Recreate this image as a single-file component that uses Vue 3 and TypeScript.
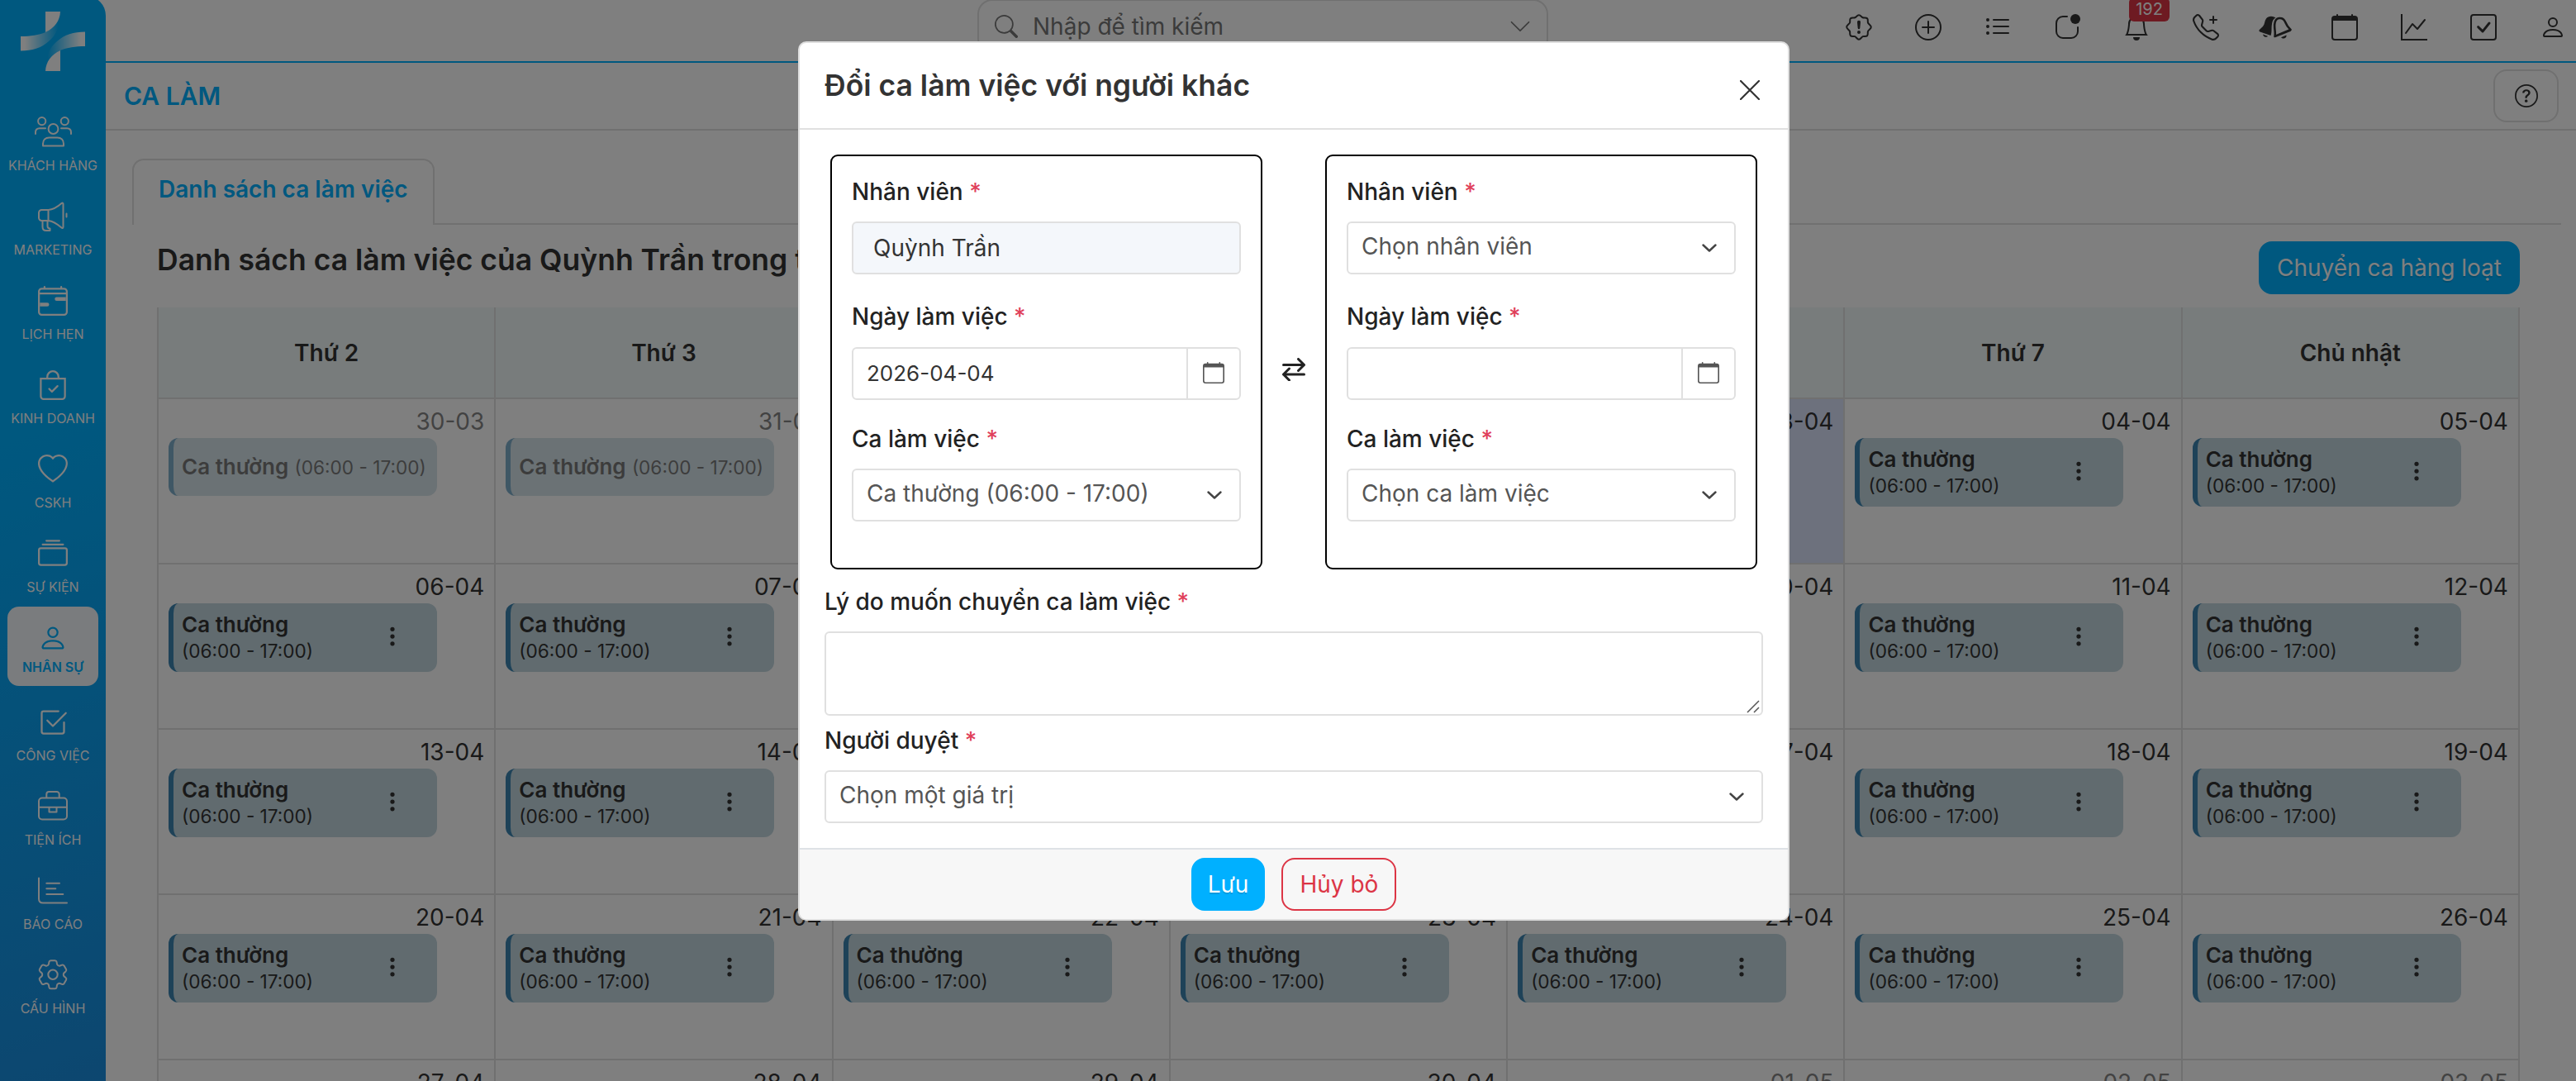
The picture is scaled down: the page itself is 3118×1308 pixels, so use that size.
<script setup lang="ts">
interface NavItem { label: string; icon: string; active?: boolean }
interface Day { date: string; muted?: boolean; past?: boolean; today?: boolean }

const nav: NavItem[] = [
  { label: 'KHÁCH HÀNG', icon: 'people' },
  { label: 'MARKETING', icon: 'megaphone' },
  { label: 'LỊCH HẸN', icon: 'calendar-range' },
  { label: 'KINH DOANH', icon: 'bag' },
  { label: 'CSKH', icon: 'heart' },
  { label: 'SỰ KIỆN', icon: 'collection' },
  { label: 'NHÂN SỰ', icon: 'person', active: true },
  { label: 'CÔNG VIỆC', icon: 'check2-square' },
  { label: 'TIỆN ÍCH', icon: 'briefcase' },
  { label: 'BÁO CÁO', icon: 'report' },
  { label: 'CẤU HÌNH', icon: 'gear' },
]

// Filled 16-unit glyphs, one or more paths each
const glyphs: Record<string, string[]> = {
  'calendar-range': [
    'M9 7a1 1 0 0 1 1-1h5v2h-5a1 1 0 0 1-1-1M1 9h4a1 1 0 0 1 0 2H1z',
    'M3.500 0a.5.5 0 0 1 .5.5V1h8V.5a.5.5 0 0 1 1 0V1h1a2 2 0 0 1 2 2v11a2 2 0 0 1-2 2H2a2 2 0 0 1-2-2V3a2 2 0 0 1 2-2h1V.5a.5.5 0 0 1 .5-.5M2 2a1 1 0 0 0-1 1v.6h14V3a1 1 0 0 0-1-1zm13 2.600H1V14a1 1 0 0 0 1 1h12a1 1 0 0 0 1-1z',
  ],
  bag: [
    'M10.854 8.146a.5.5 0 0 1 0 .708l-3 3a.5.5 0 0 1-.708 0l-1.500-1.500a.5.5 0 0 1 .708-.708L7.500 10.793l2.646-2.647a.5.5 0 0 1 .708 0',
    'M8 1a2.500 2.500 0 0 1 2.500 2.500V4h-5v-.5A2.500 2.500 0 0 1 8 1m3.500 3v-.5a3.500 3.500 0 1 0-7 0V4H1v10a2 2 0 0 0 2 2h10a2 2 0 0 0 2-2V4zM2 5h12v9a1 1 0 0 1-1 1H3a1 1 0 0 1-1-1z',
  ],
  heart: ['m8 2.748-.717-.737C5.600.281 2.514.878 1.400 3.053c-.523 1.023-.641 2.500.314 4.385.920 1.815 2.834 3.989 6.286 6.357 3.452-2.368 5.365-4.542 6.286-6.357.955-1.886.838-3.362.314-4.385C13.486.878 10.400.280 8.717 2.010zM8 15C-7.333 4.868 3.279-3.040 7.824 1.143q.090.083.176.171a3 3 0 0 1 .176-.170C12.720-3.042 23.333 4.867 8 15'],
  collection: ['M2.500 3.500a.5.5 0 0 1 0-1h11a.5.5 0 0 1 0 1zm2-2a.5.5 0 0 1 0-1h7a.5.5 0 0 1 0 1zM0 13a1.500 1.500 0 0 0 1.500 1.500h13A1.500 1.500 0 0 0 16 13V6a1.500 1.500 0 0 0-1.500-1.500h-13A1.500 1.500 0 0 0 0 6zm1.500.5A.5.5 0 0 1 1 13V6a.5.5 0 0 1 .5-.5h13a.5.5 0 0 1 .5.5v7a.5.5 0 0 1-.5.5z'],
  person: ['M8 8a3 3 0 1 0 0-6 3 3 0 0 0 0 6m2-3a2 2 0 1 1-4 0 2 2 0 0 1 4 0m4 8c0 1-1 1-1 1H3s-1 0-1-1 1-4 6-4 6 3 6 4m-1-.004c-.001-.246-.154-.986-.832-1.664C11.516 10.680 10.289 10 8 10s-3.516.680-4.168 1.332c-.678.678-.830 1.418-.832 1.664z'],
  'check2-square': [
    'M3 14.500A1.500 1.500 0 0 1 1.500 13V3A1.500 1.500 0 0 1 3 1.500h8a.5.5 0 0 1 0 1H3a.5.5 0 0 0-.5.5v10a.5.5 0 0 0 .5.5h10a.5.5 0 0 0 .5-.5V8a.5.5 0 0 1 1 0v5a1.500 1.500 0 0 1-1.500 1.500z',
    'm8.354 10.354 7-7a.5.5 0 0 0-.708-.708L8 9.293 5.354 6.646a.5.5 0 1 0-.708.708l3 3a.5.5 0 0 0 .708 0',
  ],
  plus: [
    'M8 15A7 7 0 1 1 8 1a7 7 0 0 1 0 14m0 1A8 8 0 1 0 8 0a8 8 0 0 0 0 16',
    'M8 4a.5.5 0 0 1 .5.5v3h3a.5.5 0 0 1 0 1h-3v3a.5.5 0 0 1-1 0v-3h-3a.5.5 0 0 1 0-1h3v-3A.5.5 0 0 1 8 4',
  ],
  list: ['M5 11.500a.5.5 0 0 1 .5-.5h9a.5.5 0 0 1 0 1h-9a.5.5 0 0 1-.5-.5m0-4a.5.5 0 0 1 .5-.5h9a.5.5 0 0 1 0 1h-9a.5.5 0 0 1-.5-.5m0-4a.5.5 0 0 1 .5-.5h9a.5.5 0 0 1 0 1h-9a.5.5 0 0 1-.5-.5m-3 1a1 1 0 1 0 0-2 1 1 0 0 0 0 2m0 4a1 1 0 1 0 0-2 1 1 0 0 0 0 2m0 4a1 1 0 1 0 0-2 1 1 0 0 0 0 2'],
  app: [
    'M5.500 2A3.500 3.500 0 0 0 2 5.500v5A3.500 3.500 0 0 0 5.500 14h5a3.500 3.500 0 0 0 3.500-3.500V8a.5.5 0 0 1 1 0v2.500a4.500 4.500 0 0 1-4.500 4.500h-5A4.500 4.500 0 0 1 1 10.500v-5A4.500 4.500 0 0 1 5.500 1H8a.5.5 0 0 1 0 1z',
    'M16 3a3 3 0 1 1-6 0 3 3 0 0 1 6 0',
  ],
  bell: ['M8 16a2 2 0 0 0 2-2H6a2 2 0 0 0 2 2M8 1.918l-.797.161A4 4 0 0 0 4 6c0 .628-.134 2.197-.459 3.742-.160.767-.376 1.566-.663 2.258h10.244c-.287-.692-.502-1.490-.663-2.258C12.134 8.197 12 6.628 12 6a4 4 0 0 0-3.203-3.920zM14.220 12c.223.447.481.801.780 1H1c.299-.199.557-.553.780-1C2.680 10.200 3 6.880 3 6c0-2.420 1.720-4.440 4.005-4.901a1 1 0 1 1 1.990 0A5 5 0 0 1 13 6c0 .880.320 4.200 1.220 6'],
  phone: [
    'M3.654 1.328a.678.678 0 0 0-1.015-.063L1.605 2.300c-.483.484-.661 1.169-.450 1.770a17.600 17.600 0 0 0 4.168 6.608 17.600 17.600 0 0 0 6.608 4.168c.601.211 1.286.033 1.770-.450l1.034-1.034a.678.678 0 0 0-.063-1.015l-2.307-1.794a.680.680 0 0 0-.580-.122l-2.190.547a1.750 1.750 0 0 1-1.657-.459L5.482 8.062a1.750 1.750 0 0 1-.460-1.657l.548-2.190a.680.680 0 0 0-.122-.580zM1.884.511a1.745 1.745 0 0 1 2.612.163L6.290 2.980c.329.423.445.974.315 1.494l-.547 2.190a.680.680 0 0 0 .178.643l2.457 2.457a.680.680 0 0 0 .644.178l2.189-.547a1.750 1.750 0 0 1 1.494.315l2.306 1.794c.829.645.905 1.870.163 2.611l-1.034 1.034c-.740.740-1.846 1.065-2.877.702a18.600 18.600 0 0 1-7.010-4.420 18.600 18.600 0 0 1-4.420-7.009c-.362-1.030-.037-2.137.703-2.877z',
    'M12.500 1a.5.5 0 0 1 .5.5V3h1.500a.5.5 0 0 1 0 1H13v1.500a.5.5 0 0 1-1 0V4h-1.500a.5.5 0 0 1 0-1H12V1.500a.5.5 0 0 1 .5-.5',
  ],
  calendar: ['M3.500 0a.5.5 0 0 1 .5.5V1h8V.5a.5.5 0 0 1 1 0V1h1a2 2 0 0 1 2 2v11a2 2 0 0 1-2 2H2a2 2 0 0 1-2-2V3a2 2 0 0 1 2-2h1V.5a.5.5 0 0 1 .5-.5M1 4v10a1 1 0 0 0 1 1h12a1 1 0 0 0 1-1V4z'],
  graph: ['M0 0h1v15h15v1H0zm14.817 3.113a.5.5 0 0 1 .070.704l-4.500 5.500a.5.5 0 0 1-.740.037L7.060 6.767l-3.656 5.027a.5.5 0 0 1-.808-.588l4-5.500a.5.5 0 0 1 .758-.060l2.609 2.610 4.150-5.073a.5.5 0 0 1 .704-.070'],
  check: [
    'M14 1a1 1 0 0 1 1 1v12a1 1 0 0 1-1 1H2a1 1 0 0 1-1-1V2a1 1 0 0 1 1-1zM2 0a2 2 0 0 0-2 2v12a2 2 0 0 0 2 2h12a2 2 0 0 0 2-2V2a2 2 0 0 0-2-2z',
    'M10.970 4.970a.750.750 0 0 1 1.071 1.050l-3.992 4.990a.750.750 0 0 1-1.080.020L4.324 8.384a.750.750 0 1 1 1.060-1.060l2.094 2.093 3.473-4.425z',
  ],
  question: [
    'M8 15A7 7 0 1 1 8 1a7 7 0 0 1 0 14m0 1A8 8 0 1 0 8 0a8 8 0 0 0 0 16',
    'M5.255 5.786a.237.237 0 0 0 .241.247h.825c.138 0 .248-.113.266-.250.090-.656.540-1.134 1.342-1.134.686 0 1.314.343 1.314 1.168 0 .635-.374.927-.965 1.371-.673.489-1.206 1.060-1.168 1.987l.003.217a.250.250 0 0 0 .250.246h.811a.250.250 0 0 0 .250-.250v-.105c0-.718.273-.927 1.010-1.486.609-.463 1.244-.977 1.244-2.056 0-1.511-1.276-2.241-2.673-2.241-1.267 0-2.655.590-2.750 2.286m1.557 5.763c0 .533.425.927 1.010.927.609 0 1.028-.394 1.028-.927 0-.552-.420-.940-1.029-.940-.584 0-1.009.388-1.009.940',
  ],
  search: ['M11.742 10.344a6.500 6.500 0 1 0-1.397 1.398h-.001q.044.060.098.115l3.850 3.850a1 1 0 0 0 1.415-1.414l-3.850-3.850a1 1 0 0 0-.115-.100zM12 6.500a5.500 5.500 0 1 1-11 0 5.500 5.500 0 0 1 11 0'],
  chevron: ['M1.646 4.646a.5.5 0 0 1 .708 0L8 10.293l5.646-5.647a.5.5 0 0 1 .708.708l-6 6a.5.5 0 0 1-.708 0l-6-6a.5.5 0 0 1 0-.708'],
  dots: ['M9.500 13a1.500 1.500 0 1 1-3 0 1.500 1.500 0 0 1 3 0m0-5a1.500 1.500 0 1 1-3 0 1.500 1.500 0 0 1 3 0m0-5a1.500 1.500 0 1 1-3 0 1.500 1.500 0 0 1 3 0'],
}

const topIcons = ['patch', 'plus', 'list', 'app', 'bell', 'phone', 'bells', 'calendar', 'graph', 'check', 'person']

const weekdays = ['Thứ 2', 'Thứ 3', 'Thứ 4', 'Thứ 5', 'Thứ 6', 'Thứ 7', 'Chủ nhật']

// Six weeks beginning on Monday 30 March 2026
const weeks: Day[][] = Array.from({ length: 6 }, (_, w) =>
  Array.from({ length: 7 }, (_, d) => {
    const day = new Date(Date.UTC(2026, 2, 30 + w * 7 + d))
    const dd = String(day.getUTCDate()).padStart(2, '0')
    const mm = String(day.getUTCMonth() + 1).padStart(2, '0')
    return { date: `${dd}-${mm}`, muted: mm !== '04', past: w === 0 && d < 4, today: dd === '03' && mm === '04' }
  }),
)
</script>

<template>
  <div class="app">
    <aside class="sidebar">
      <svg class="logo" viewBox="0 0 78 72">
        <defs>
          <linearGradient id="band" x1="0" x2="1" y1="0" y2="0">
            <stop offset="0.1" stop-color="#fff" />
            <stop offset="0.95" stop-color="#fff" stop-opacity="0" />
          </linearGradient>
        </defs>
        <g v-for="turn in [0, 180]" :key="turn" :transform="`rotate(${turn} 39 36)`">
          <path d="M30 0h18c-.4 11-7 20-18 25z" fill="#fff" />
          <path d="M0 30c12 0 22-1.600 30-5C41 20 47.600 11 48 0c.400 16-4 28-14 36-9 8-20 11.500-34 11.500z" fill="url(#band)" />
        </g>
      </svg>
      <nav class="menu">
        <a v-for="item in nav" :key="item.label" class="menu-item" :class="{ active: item.active }">
          <svg v-if="item.icon === 'people'" class="menu-icon line wide" viewBox="0 0 45 37">
            <circle cx="8.700" cy="5.600" r="4.600" /><circle cx="36.300" cy="5.600" r="4.600" /><circle cx="22.500" cy="15" r="5.900" />
            <path d="M1 21v-2c0-3 1.800-4.800 4.800-4.800H13M44 21v-2c0-3-1.800-4.800-4.800-4.800H32M10 35.500V33c0-4.500 3-7.500 7.500-7.500h10c4.500 0 7.500 3 7.500 7.500v2.500z" />
          </svg>
          <svg v-else-if="item.icon === 'megaphone'" class="menu-icon line" viewBox="0 0 36 36">
            <path d="M12.500 10H4.500A3.500 3.500 0 0 0 1 13.500v6A3.500 3.500 0 0 0 4.500 23h8zM12.500 10C19 9.500 24 6 28.500 2c1-.9 2-.5 2 .8v28c0 1.300-1 1.700-2 .8-4.500-4-9.500-8-16-8.600M5.500 23.500v7c0 3 1.500 4.500 4.500 4.500h4.500v-2.500c-2 0-3-1-3-3v-5.500M34.500 14.500v4" />
          </svg>
          <svg v-else-if="item.icon === 'briefcase'" class="menu-icon line" viewBox="0 0 36 36">
            <rect x="1" y="7.500" width="34" height="26" rx="4" />
            <path d="M10.300 7V3a3 3 0 0 1 3-3h9.400a3 3 0 0 1 3 3v4M1 18.700h34M13.500 19v5.500h9V19" />
          </svg>
          <svg v-else-if="item.icon === 'report'" class="menu-icon line" viewBox="0 0 36 36">
            <path d="M1 2.500v25c0 3.300 1.700 5 5 5h29M10.300 8.700H26M10.300 15.300h11M10.300 22h20" />
          </svg>
          <svg v-else-if="item.icon === 'gear'" class="menu-icon gear" viewBox="2.525 2.925 18.950 18.950">
            <path d="M9.594 3.940c.090-.542.560-.940 1.110-.940h2.593c.550 0 1.020.398 1.110.940l.213 1.281c.063.374.313.686.645.870.074.040.147.083.220.127.325.196.720.257 1.075.124l1.217-.456a1.125 1.125 0 0 1 1.370.490l1.296 2.247a1.125 1.125 0 0 1-.260 1.431l-1.003.827c-.293.241-.438.613-.430.992a7.723 7.723 0 0 1 0 .255c-.008.378.137.750.430.991l1.004.827c.424.350.534.955.260 1.430l-1.298 2.247a1.125 1.125 0 0 1-1.369.491l-1.217-.456c-.355-.133-.750-.072-1.076.124a6.470 6.470 0 0 1-.220.128c-.331.183-.581.495-.644.869l-.213 1.281c-.090.543-.560.940-1.110.940h-2.594c-.550 0-1.019-.398-1.110-.940l-.213-1.281c-.062-.374-.312-.686-.644-.870a6.520 6.520 0 0 1-.220-.127c-.325-.196-.720-.257-1.076-.124l-1.217.456a1.125 1.125 0 0 1-1.369-.490l-1.297-2.247a1.125 1.125 0 0 1 .260-1.431l1.004-.827c.292-.240.437-.613.430-.991a6.932 6.932 0 0 1 0-.255c.007-.380-.138-.751-.430-.992l-1.004-.827a1.125 1.125 0 0 1-.260-1.430l1.297-2.247a1.125 1.125 0 0 1 1.370-.491l1.216.456c.356.133.751.072 1.076-.124.072-.044.146-.086.220-.128.332-.183.582-.495.644-.869l.214-1.280Z" />
            <circle cx="12" cy="12" r="3" />
          </svg>
          <svg v-else class="menu-icon" viewBox="0 0 16 16">
            <path v-for="d in glyphs[item.icon]" :key="d" :d="d" fill-rule="evenodd" />
          </svg>
          <span class="menu-label">{{ item.label }}</span>
        </a>
      </nav>
    </aside>

    <div class="page">
      <header class="topbar">
        <div class="search">
          <svg class="i28" viewBox="0 0 16 16"><path :d="glyphs.search[0]" /></svg>
          <span class="search-text">Nhập để tìm kiếm</span>
          <svg class="i28" viewBox="0 0 16 16"><path :d="glyphs.chevron[0]" /></svg>
        </div>
        <div class="actions">
          <span v-for="name in topIcons" :key="name" class="action" :class="name">
            <svg v-if="name === 'patch'" class="i32 line" viewBox="0 0 32 32">
              <path d="M16 1.200c2 0 3.200 2.500 4.700 3.100s4-.5 5.400.9.300 3.900.9 5.400 3.800 2.900 3.800 5.100-3.100 3.600-3.800 5.100.5 4-.9 5.400-3.900.3-5.400.9-2.700 3.700-4.700 3.700-3.200-3.100-4.700-3.700-4 .5-5.400-.9-.3-3.900-.9-5.400-3.800-3-3.800-5.100S4.300 12 5 10.600s-.5-4 .9-5.400 3.900-.3 5.400-.9S14 1.200 16 1.200z" />
              <path class="solid" d="M14 9.990a2.010 2.010 0 1 1 4 0l-.7 7.010a1.306 1.306 0 0 1-2.600 0zM14 22a2 2 0 1 1 4 0 2 2 0 0 1-4 0" />
            </svg>
            <svg v-else-if="name === 'bells'" class="bells-icon" viewBox="0 0 40 29">
              <path d="M18.500 1.500C15 .2 11 .8 9 3.500 6.800 6.500 7.500 10 5 13L.8 17c-.8 1-.3 2 .7 2.400L14.500 24c1.800-5 .5-9 1.500-14 .5-3.500 1.500-6 4.500-7.500z" />
              <path d="M5 22.500l6 2.200c-1 2-5.500 1.500-6-2.200z" />
              <path class="outline" d="M19.500 25c1-5-.8-9.500-.3-14.500.3-4 2-7 5.500-7.500 3.500-.4 6 1.500 7.300 4.500 1.600 4 3.200 6.500 6.500 9.500zM19.500 25l19-7.500" />
              <path d="M27 26.200l6.500-2.700c.8 3.500-4.300 5.500-6.500 2.700z" />
            </svg>
            <svg v-else class="i32" viewBox="0 0 16 16">
              <path v-for="d in glyphs[name]" :key="d" :d="d" fill-rule="evenodd" />
            </svg>
            <span v-if="name === 'bell'" class="badge">192</span>
          </span>
        </div>
      </header>

      <div class="titlebar">
        <h1>CA LÀM</h1>
        <button class="help">
          <svg class="i28" viewBox="0 0 16 16"><path v-for="d in glyphs.question" :key="d" :d="d" /></svg>
        </button>
      </div>

      <div class="tabs">
        <div class="tab">Danh sách ca làm việc</div>
        <div class="tab-rule"></div>
      </div>

      <div class="heading">
        <h2>Danh sách ca làm việc của Quỳnh Trần trong tháng 04</h2>
        <button class="btn primary">Chuyển ca hàng loạt</button>
      </div>

      <div class="calendar-grid">
        <div class="week head">
          <div v-for="name in weekdays" :key="name" class="cell">{{ name }}</div>
        </div>
        <div v-for="(week, w) in weeks" :key="w" class="week">
          <div v-for="day in week" :key="day.date" class="cell" :class="{ today: day.today }">
            <div class="date" :class="{ muted: day.muted }">{{ day.date }}</div>
            <div class="shift" :class="{ past: day.past }">
              <div class="shift-text">
                <strong>Ca thường</strong>
                <template v-if="day.past">&nbsp;</template>
                <span>(06:00 - 17:00)</span>
              </div>
              <svg v-if="!day.past" class="i28 dots" viewBox="0 0 16 16"><path :d="glyphs.dots[0]" /></svg>
            </div>
          </div>
        </div>
      </div>
    </div>

    <div class="overlay">
      <section class="modal">
        <header class="modal-head">
          <h3>Đổi ca làm việc với người khác</h3>
          <svg class="close" viewBox="0 0 24 24"><path d="M1 1l22 22M23 1L1 23" /></svg>
        </header>
        <div class="modal-body">
          <div class="swap-row">
            <div class="panel">
              <div class="label">Nhân viên <i>*</i></div>
              <div class="field readonly">Quỳnh Trần</div>
              <div class="label day">Ngày làm việc <i>*</i></div>
              <div class="field date-field">
                <span>2026-04-04</span>
                <div class="addon"><svg class="i26" viewBox="0 0 16 16"><path :d="glyphs.calendar[0]" /></svg></div>
              </div>
              <div class="label slot">Ca làm việc <i>*</i></div>
              <div class="field select">
                <span>Ca thường (06:00 - 17:00)</span>
                <svg class="chev" viewBox="0 0 18 10"><path d="M1.500 1.500 9 8.500l7.500-7" /></svg>
              </div>
            </div>
            <svg class="i28 swap" viewBox="0 0 28 28"><path d="M1.500 8.500h25M19.500 1.500l7 7-7 7M26.500 20h-25M8.500 13l-7 7 7 7" /></svg>
            <div class="panel">
              <div class="label">Nhân viên <i>*</i></div>
              <div class="field select">
                <span>Chọn nhân viên</span>
                <svg class="chev" viewBox="0 0 18 10"><path d="M1.500 1.500 9 8.500l7.500-7" /></svg>
              </div>
              <div class="label day">Ngày làm việc <i>*</i></div>
              <div class="field date-field">
                <span></span>
                <div class="addon"><svg class="i26" viewBox="0 0 16 16"><path :d="glyphs.calendar[0]" /></svg></div>
              </div>
              <div class="label slot">Ca làm việc <i>*</i></div>
              <div class="field select">
                <span>Chọn ca làm việc</span>
                <svg class="chev" viewBox="0 0 18 10"><path d="M1.500 1.500 9 8.500l7.500-7" /></svg>
              </div>
            </div>
          </div>
          <div class="label reason">Lý do muốn chuyển ca làm việc <i>*</i></div>
          <div class="field area">
            <svg class="grip" viewBox="0 0 16 16"><path d="M1 15 15 1M9 15l6-6" /></svg>
          </div>
          <div class="label approver">Người duyệt <i>*</i></div>
          <div class="field select">
            <span>Chọn một giá trị</span>
            <svg class="chev" viewBox="0 0 18 10"><path d="M1.500 1.500 9 8.500l7.500-7" /></svg>
          </div>
        </div>
        <footer class="modal-foot">
          <button class="btn primary">Lưu</button>
          <button class="btn danger">Hủy bỏ</button>
        </footer>
      </section>
    </div>
  </div>
</template>

<style>
body { overflow: hidden; background: #fff; }
</style>

<style scoped>
.app, .app * { box-sizing: border-box; }
.app {
  position: relative;
  display: flex;
  width: 3118px;
  height: 1308px;
  overflow: hidden;
  font-family: Inter, "Noto Sans", sans-serif;
  font-size: 28px;
  line-height: 42px;
  color: #333;
}
svg { display: block; fill: currentColor; flex: none; }
h1, h2, h3 { margin: 0; font-weight: 600; white-space: nowrap; }
button { font: inherit; margin: 0; }
.i28 { width: 28px; height: 28px; }
.i26 { width: 26px; height: 26px; }
.i32 { width: 32px; height: 32px; }
.line { fill: none; stroke: currentColor; stroke-width: 2; stroke-linecap: round; stroke-linejoin: round; }
.line .solid { fill: currentColor; stroke: none; }

.sidebar {
  width: 128px;
  height: 1314px;
  margin-top: -5px;
  padding-top: 19px;
  flex: none;
  color: #fff;
  background: linear-gradient(160deg, #00b0ff 40%, #1a8ee0 100%);
  border-radius: 4px 24px 0 0;
}
.logo { width: 78px; height: 72px; margin: 0 auto; }
.menu { display: flex; flex-direction: column; gap: 6px; align-items: center; margin-top: 36px; }
.menu-item {
  width: 110px;
  height: 96px;
  padding-top: 20px;
  display: flex;
  flex-direction: column;
  align-items: center;
  border-radius: 14px;
}
.menu-icon { width: 36px; height: 36px; overflow: visible; }
.menu-icon.wide { width: 45px; height: 37px; margin-top: -1px; }
.menu-icon.gear { fill: none; stroke: currentColor; stroke-width: 1.05; }
.menu-label { margin-top: 10px; font-size: 16px; line-height: 24px; white-space: nowrap; }
.menu-item.active { background: #f5f9fc; color: #00b0ff; }
.menu-item.active .menu-label { margin-top: 5px; font-weight: 600; }

.page { flex: 1; min-width: 0; background: #fff; }
.topbar {
  height: 76px;
  border-bottom: 2px solid #00b0ff;
  display: flex;
  align-items: flex-start;
  justify-content: space-between;
  padding-right: 12px;
}
.search {
  width: 691px;
  height: 66px;
  margin: -1px 0 0 1055px;
  border: 2px solid #e0e0e0;
  border-radius: 18px;
  display: flex;
  align-items: center;
  padding: 0 18px 0 19px;
  color: #777;
}
.search-text { flex: 1; margin-left: 18px; }
.actions { display: flex; gap: 52px; padding-top: 17px; }
.action { position: relative; width: 32px; height: 32px; display: flex; justify-content: center; }
.bells-icon { width: 40px; height: 29px; margin-top: 2px; }
.bells-icon .outline { fill: none; stroke: currentColor; stroke-width: 2.6; stroke-linejoin: round; }
.badge {
  position: absolute;
  left: 7px;
  top: -20px;
  width: 49px;
  height: 29px;
  border-radius: 6px;
  background: #dc3545;
  color: #fff;
  font-size: 20px;
  line-height: 29px;
  text-align: center;
}

.titlebar {
  height: 82px;
  border-bottom: 2px solid #e0e0e0;
  display: flex;
  align-items: center;
  justify-content: space-between;
  padding: 0 21px 0 22px;
}
.titlebar h1 { font-size: 30px; color: #00b0ff; }
.help {
  width: 79px;
  height: 64px;
  border: 2px solid #e0e0e0;
  border-radius: 16px;
  background: none;
  color: #333;
  display: flex;
  align-items: center;
  justify-content: center;
}

.tabs { display: flex; align-items: flex-end; margin: 34px 18px 0 32px; height: 80px; }
.tab {
  height: 80px;
  width: 366px;
  border: 2px solid #e0e0e0;
  border-bottom: 0;
  border-radius: 14px 14px 0 0;
  padding: 14px 0 0 30px;
  font-weight: 600;
  color: #00b0ff;
  white-space: nowrap;
}
.tab-rule { flex: 1; height: 2px; background: #e0e0e0; margin-left: -2px; }

.heading { display: flex; justify-content: space-between; height: 100px; padding: 20px 68px 0 62px; }
.heading h2 { font-size: 35.5px; line-height: 46px; }
.btn {
  height: 64px;
  padding: 0 20px;
  border: 2px solid transparent;
  border-radius: 16px;
  font-size: 28px;
  white-space: nowrap;
}
.btn.primary { background: #00b0ff; border-color: #00b0ff; color: #fff; text-shadow: 0 2px 0 rgba(0, 0, 0, .12); }
.btn.danger { background: none; border-color: #dc3545; color: #dc3545; }

.calendar-grid { margin: 0 68px 0 62px; border-left: 2px solid #e0e0e0; }
.week { display: flex; height: 200px; }
.cell { flex: 1 1 0; border-right: 2px solid #e0e0e0; border-bottom: 2px solid #e0e0e0; }
.week.head { height: 111px; }
.head .cell {
  display: flex;
  align-items: center;
  justify-content: center;
  background: #f0f8f8;
  font-weight: 600;
}
.cell.today { background: #dbe2fb; }
.date { height: 47px; line-height: 54px; padding-right: 12px; text-align: right; }
.date.muted { color: #222; opacity: .55; }
.shift {
  display: flex;
  align-items: center;
  width: 325px;
  height: 83px;
  margin-left: 12px;
  border-left: 6px solid #3c84b0;
  border-radius: 12px;
  background: #c2d7df;
  padding-left: 10px;
}
.shift-text { flex: 1; display: flex; flex-direction: column; padding-bottom: 2px; }
.shift strong { font-size: 26px; font-weight: 600; line-height: 34px; }
.shift span { font-size: 22.6px; line-height: 30px; }
.shift.past { height: 70px; opacity: .65; }
.shift.past .shift-text { display: block; padding: 0; font-size: 26px; white-space: nowrap; }
.dots { margin: -4px 40px 0 0; }

.overlay {
  position: absolute;
  inset: 0;
  background: rgba(0, 0, 0, .5);
  display: flex;
  align-items: flex-start;
  justify-content: center;
  padding: 50px 0 0 14px;
}
.modal {
  width: 1200px;
  height: 1064px;
  border: 2px solid #dedede;
  border-radius: 10px;
  background: #fff;
  overflow: hidden;
  display: flex;
  flex-direction: column;
}
.modal-head {
  height: 105px;
  border-bottom: 2px solid #e0e0e0;
  display: flex;
  align-items: center;
  justify-content: space-between;
  padding: 0 34px 0 30px;
}
.modal-head h3 { font-size: 35.5px; }
.close { width: 24px; height: 24px; margin-top: 11px; stroke: #333; stroke-width: 2.2; stroke-linecap: round; }
.modal-body { flex: 1; padding: 30px; }
.swap-row { display: flex; align-items: center; justify-content: space-between; padding: 0 7px; }
.panel {
  width: 523px;
  height: 502px;
  border: 2px solid #000;
  border-radius: 9px;
  padding: 22px 24px 0;
}
.swap { fill: none; stroke: #222; stroke-width: 3; stroke-linecap: round; stroke-linejoin: round; margin-top: 17px; }
.label { height: 42px; margin-bottom: 15px; font-weight: 500; color: #222; white-space: nowrap; }
.label i { font-style: normal; color: #e0405a; }
.label.day { margin: 30px 0 16px; }
.label.slot { margin: 26px 0 15px; }
.label.reason { margin: 18px 0 15px; }
.label.approver { margin: 9px 0 15px; }
.field {
  height: 64px;
  border: 2px solid #e0e0e0;
  border-radius: 6px;
  display: flex;
  align-items: center;
  justify-content: space-between;
  white-space: nowrap;
}
.readonly { background: #f4f7fb; padding-left: 24px; color: #333; }
.date-field { padding-left: 16px; font-size: 26px; color: #333; }
.addon {
  width: 64px;
  height: 100%;
  border-left: 2px solid #e0e0e0;
  display: flex;
  align-items: center;
  justify-content: center;
  padding-bottom: 2px;
  color: #555;
}
.select { padding: 0 21px 0 16px; color: #555; }
.select span { margin-top: -4px; }
.chev { width: 18px; height: 10px; fill: none; stroke: #444; stroke-width: 2.4; stroke-linecap: round; stroke-linejoin: round; }
.area { height: 102px; align-items: flex-end; justify-content: flex-end; padding: 0 2px 1px 0; }
.grip { width: 16px; height: 16px; stroke: #555; stroke-width: 1.5; }
.modal-foot {
  height: 86px;
  border-top: 2px solid #dee2e6;
  background: #f7f7f7;
  display: flex;
  justify-content: center;
  gap: 20px;
  padding-top: 10px;
}
.modal-foot .primary { padding: 0 18px; }
</style>
